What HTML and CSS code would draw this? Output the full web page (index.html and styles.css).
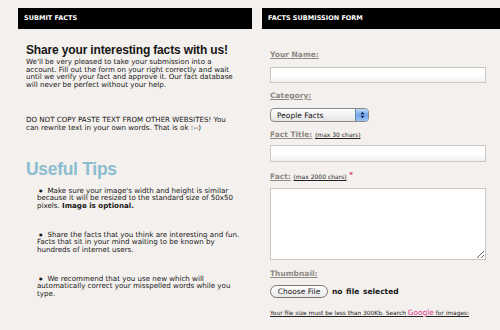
FILE: index.html
```html
<!DOCTYPE html>
<html lang="en">
  <head>
    <title>Submit Facts</title>
    <link rel="stylesheet" href="styles.css">
  </head>
  <body>
    <main class="page">
      <section class="col col-left">
        <h3 class="bar">SUBMIT FACTS</h3>
        <div class="inner">
          <h1 class="intro-title">Share your interesting facts with us!</h1>
          <p class="copy">We'll be very pleased to take your submission into a account. Fill out the form on your right correctly and wait until we verify your fact and approve it. Our fact database will never be perfect without your help.</p>
          <p class="copy warn">DO NOT COPY PASTE TEXT FROM OTHER WEBSITES! You can rewrite text in your own words. That is ok :--)</p>
          <h2 class="tips-title">Useful Tips</h2>
          <ul class="tips">
            <li>Make sure your image's width and height is similar because it will be resized to the standard size of 50x50 pixels. <b>Image is optional.</b></li>
            <li>Share the facts that you think are interesting and fun. Facts that sit in your mind waiting to be known by hundreds of internet users.</li>
            <li>We recommend that you use new which will automatically correct your misspelled words while you type.</li>
          </ul>
        </div>
      </section>

      <section class="col col-right">
        <h3 class="bar">FACTS SUBMISSION FORM</h3>
        <form class="inner form">
          <label class="lbl lbl-name" for="name"><u>Your Name:</u></label>
          <input class="field" id="name" type="text">

          <label class="lbl lbl-cat" for="cat"><u>Category:</u></label>
          <div class="select">
            <span class="select-value">People Facts</span>
            <span class="select-btn">
              <svg viewBox="0 0 6 10" width="5" height="8">
                <path d="M0.5,4 3,1 5.5,4Z M0.5,6 3,9 5.5,6Z" fill="#10224a" />
              </svg>
            </span>
          </div>

          <label class="lbl lbl-title" for="title"><u>Fact Title:</u> <span class="hint">(max 30 chars)</span></label>
          <input class="field field-title" id="title" type="text">

          <label class="lbl lbl-fact" for="fact"><u>Fact:</u> <span class="hint">(max 2000 chars)</span> <span class="req">*</span></label>
          <textarea class="area" id="fact"></textarea>

          <label class="lbl lbl-thumb"><u>Thumbnail:</u></label>
          <div class="file">
            <span class="file-btn">Choose File</span>
            <span class="file-name">no file selected</span>
          </div>

          <p class="note">Your file size must be less than 300Kb. Search <span class="google">Google</span> for images:</p>
        </form>
      </section>
    </main>
  </body>
</html>
```

FILE: styles.css
```css
html,
body {
  margin: 0;
  background: #f3f0ed;
  color: #161616;
  font-family: 'DejaVu Sans', Verdana, sans-serif;
  overflow: hidden;
}

.page {
  display: flex;
  gap: 10px;
  padding: 8px 0 0 18px;
  width: 500px;
  box-sizing: border-box;
}

.col-left {
  width: 234px;
  flex: none;
}

.col-right {
  flex: 1;
}

.bar {
  margin: 0;
  height: 21px;
  background: #000;
  color: #fff;
  font-size: 6.5px;
  font-weight: bold;
  line-height: 21px;
  padding-left: 6px;
}

.inner {
  padding-left: 8px;
}

.col-left .inner {
  padding-right: 12px;
}

.intro-title {
  margin: 15px 0 0;
  font-family: 'Liberation Sans', Arial, sans-serif;
  font-size: 12px;
  line-height: 12px;
  letter-spacing: -0.15px;
}

.copy {
  margin: 2px 0 0;
  font-size: 7.1px;
  line-height: 7.6px;
}

.warn {
  margin-top: 28px;
}

.tips-title {
  margin: 28px 0 0;
  font-family: 'Liberation Sans', Arial, sans-serif;
  font-size: 17.5px;
  line-height: 18px;
  color: #8bbdd0;
  letter-spacing: -0.3px;
}

.tips {
  margin: 9px 0 0;
  padding: 0 0 0 11px;
  list-style: none;
  font-size: 7.1px;
  line-height: 7.7px;
}

.tips li {
  margin-bottom: 21px;
}

.tips li::before {
  content: "\25CF";
  font-size: 4px;
  vertical-align: 1px;
  margin: 0 5px 0 2px;
}

.form {
  display: flex;
  flex-direction: column;
  align-items: flex-start;
}

.lbl {
  font-size: 7.5px;
  line-height: 10px;
  font-weight: bold;
  color: #8e8984;
}

.lbl-name {
  margin-top: 21px;
}

.lbl-cat {
  margin-top: 8.5px;
}

.lbl-title,
.lbl-fact {
  margin-top: 8px;
}

.lbl-thumb {
  margin-top: 8.5px;
}

.hint {
  font-size: 6px;
  font-weight: normal;
  color: #222;
  text-decoration: underline;
}

.req {
  color: #e0337f;
  font-size: 7px;
  vertical-align: 2px;
}

.field {
  margin: 6.5px 0 0;
  width: 216px;
  height: 16px;
  box-sizing: border-box;
  border: 1.5px solid #cbc7c3;
  background: linear-gradient(#ffffff 55%, #f0f0f0);
  padding: 0 3px;
}

.field-title {
  margin-top: 4.5px;
  height: 17.5px;
}

.select {
  margin-top: 7px;
  width: 99px;
  height: 14px;
  box-sizing: border-box;
  border: 1px solid #8a8a8a;
  border-radius: 4px;
  background: linear-gradient(#ffffff, #e4e4e4);
  display: flex;
  align-items: center;
  position: relative;
  overflow: hidden;
}

.select-value {
  font-size: 7.5px;
  padding-left: 6px;
  color: #111;
}

.select-btn {
  position: absolute;
  right: 0;
  top: 0;
  bottom: 0;
  width: 12px;
  background: linear-gradient(#c3dbf7, #6fa4ea 50%, #9cc4f3);
  border-left: 1px solid #6a86b0;
  display: flex;
  align-items: center;
  justify-content: center;
}

.area {
  margin: 6px 0 0;
  width: 216px;
  height: 72px;
  box-sizing: border-box;
  border: 1.5px solid #cbc7c3;
  background: #fff;
  resize: both;
}

.file {
  margin-top: 6px;
  display: flex;
  align-items: center;
  gap: 4px;
}

.file-btn {
  height: 13.5px;
  box-sizing: border-box;
  border: 1px solid #777;
  border-radius: 7px;
  background: linear-gradient(#ffffff, #e8e8e8);
  font-size: 7.5px;
  line-height: 11.5px;
  padding: 0 5px;
  width: 58px;
  text-align: center;
}

.file-name {
  font-size: 7.5px;
  font-weight: bold;
  word-spacing: 1px;
}

.note {
  margin: 11px 0 0;
  font-size: 5.9px;
  line-height: 8px;
  text-decoration: underline;
  color: #222;
}

.google {
  color: #d9338a;
  font-size: 7.4px;
}
```
